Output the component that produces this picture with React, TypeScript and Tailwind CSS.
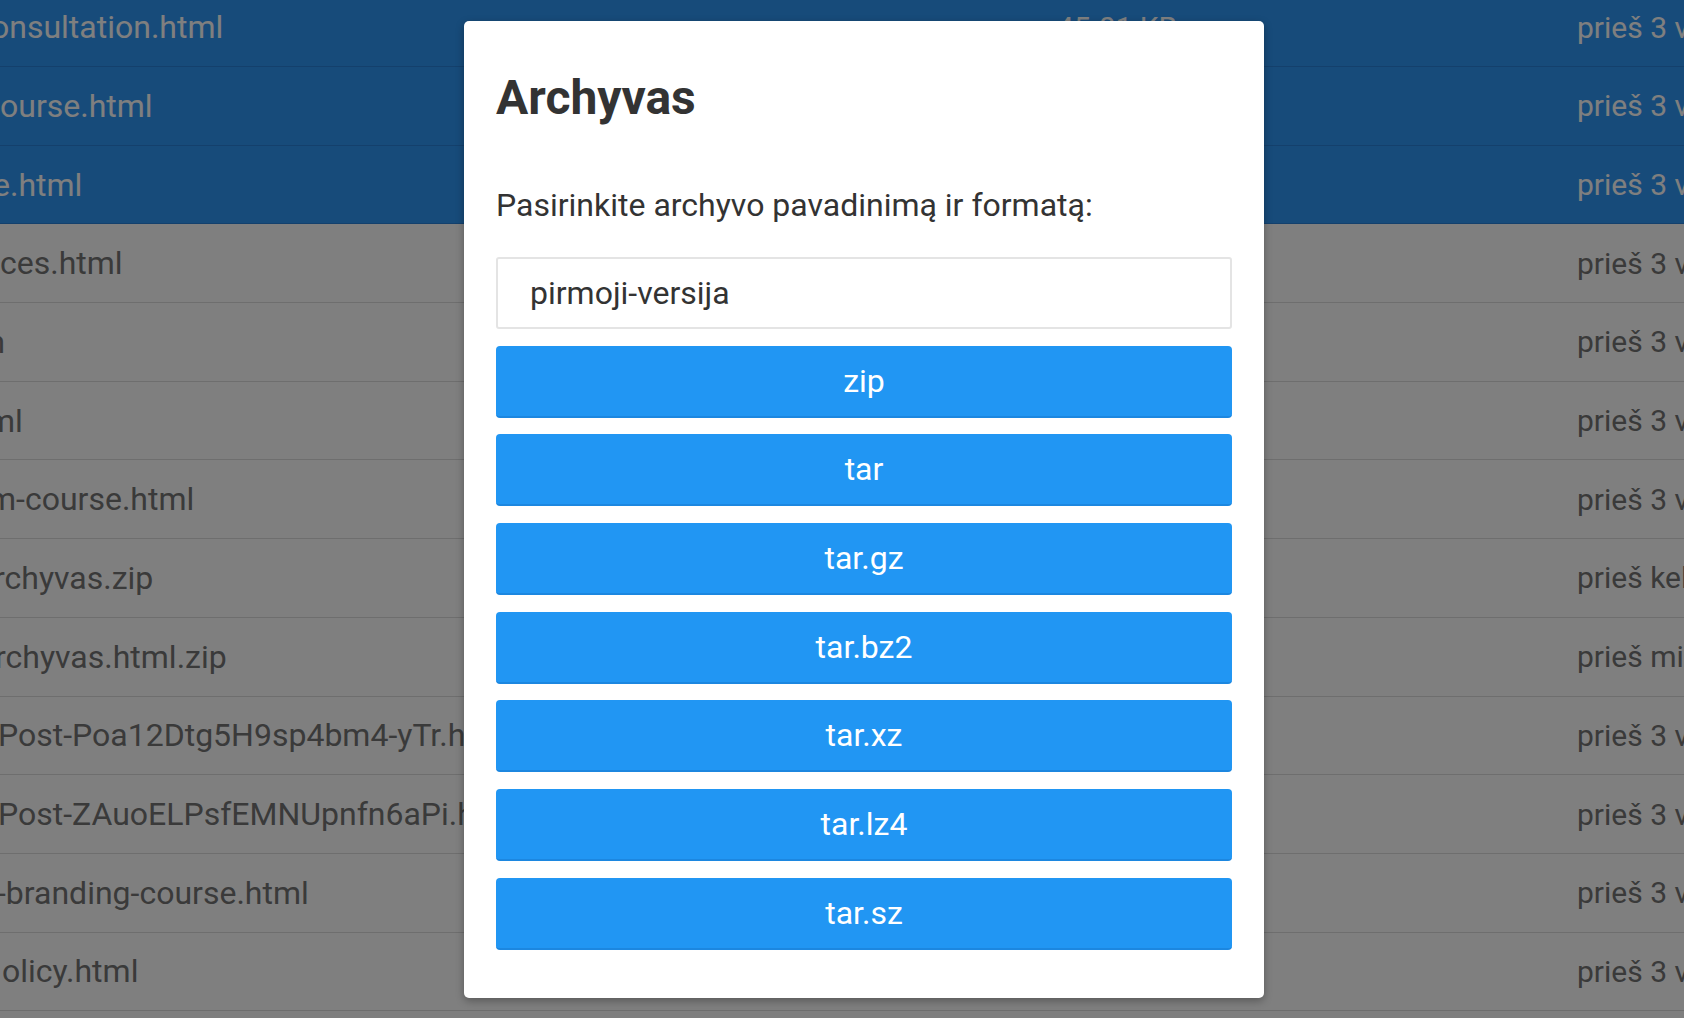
import React from "react";

type Row = { name: string; shift: string; size: string; date: string; selected?: boolean };

const rows: Row[] = [
  { name: "onsultation.html", shift: "ml-[-9px]", size: "45.01 KB", date: "prieš 3 valandas", selected: true },
  { name: "ourse.html", shift: "ml-[0px]", size: "32.18 KB", date: "prieš 3 valandas", selected: true },
  { name: "e.html", shift: "ml-[-7px]", size: "28.44 KB", date: "prieš 3 valandas", selected: true },
  { name: "ces.html", shift: "ml-[0px]", size: "39.72 KB", date: "prieš 3 valandas" },
  { name: "m", shift: "ml-[-23px]", size: "24.05 KB", date: "prieš 3 valandas" },
  { name: "ml", shift: "ml-[-13px]", size: "41.37 KB", date: "prieš 3 valandas" },
  { name: "m-course.html", shift: "ml-[-12px]", size: "36.90 KB", date: "prieš 3 valandas" },
  { name: "rchyvas.zip", shift: "ml-[-6px]", size: "112.6 KB", date: "prieš kelias sekundes" },
  { name: "rchyvas.html.zip", shift: "ml-[-5px]", size: "12.31 KB", date: "prieš minutę" },
  { name: "Post-Poa12Dtg5H9sp4bm4-yTr.html", shift: "ml-[-2px]", size: "18.76 KB", date: "prieš 3 valandas" },
  { name: "Post-ZAuoELPsfEMNUpnfn6aPi.html", shift: "ml-[-2px]", size: "19.02 KB", date: "prieš 3 valandas" },
  { name: "-branding-course.html", shift: "ml-[-3px]", size: "34.55 KB", date: "prieš 3 valandas" },
  { name: "olicy.html", shift: "ml-[2px]", size: "21.48 KB", date: "prieš 3 valandas" },
  { name: "", shift: "ml-[0px]", size: "", date: "" },
];

const formats = ["zip", "tar", "tar.gz", "tar.bz2", "tar.xz", "tar.lz4", "tar.sz"];

export default function App() {
  return (
    <div
      className="relative w-[1684px] h-[1018px] overflow-hidden bg-white"
      style={{ fontFamily: "Roboto, 'Noto Sans', sans-serif" }}
    >
      {/* file list */}
      <div className="mt-[-11.7px] flex flex-col">
        {rows.map((r, i) => (
          <div
            key={i}
            className={
              r.selected
                ? "flex h-[78.7px] shrink-0 items-center border-b border-[#2881d8] bg-[#2e96f4] text-white text-[32px] whitespace-nowrap"
                : "flex h-[78.7px] shrink-0 items-center border-b border-[#dcdcdc] bg-white text-[#757575] text-[32px] whitespace-nowrap"
            }
          >
            <div className="w-[1057px] shrink-0 overflow-hidden">
              <span className={"block " + r.shift}>{r.name}</span>
            </div>
            <div className="w-[520px] shrink-0 overflow-hidden text-[30px]">{r.size}</div>
            <div className="shrink-0 text-[30px]">{r.date}</div>
          </div>
        ))}
      </div>

      {/* overlay */}
      <div className="absolute inset-0 bg-black/50" />

      {/* modal */}
      <div className="absolute left-[464px] top-[21px] w-[800px] rounded-[5px] bg-white px-[32px] pt-[48px] pb-[48px] shadow-[0_3px_8px_rgba(0,0,0,0.3)] text-[#333333]">
        <h2 className="text-[48px] leading-[58px] font-bold">Archyvas</h2>
        <p className="mt-[54px] text-[32px] leading-[48px]">Pasirinkite archyvo pavadinimą ir formatą:</p>
        <div className="mt-[28px] flex h-[72px] items-center rounded-[3px] border-2 border-[#e4e4e4] pl-[32px] text-[32px] text-[#333333]">
          pirmoji-versija
        </div>
        <div className="mt-[16.7px] flex flex-col gap-[16.7px]">
          {formats.map((f) => (
            <div
              key={f}
              className="flex h-[72px] items-center justify-center rounded-[4px] border-b-2 border-[#1c87e0] bg-[#2196f3] text-[32px] font-normal text-white"
            >
              {f}
            </div>
          ))}
        </div>
      </div>
    </div>
  );
}
